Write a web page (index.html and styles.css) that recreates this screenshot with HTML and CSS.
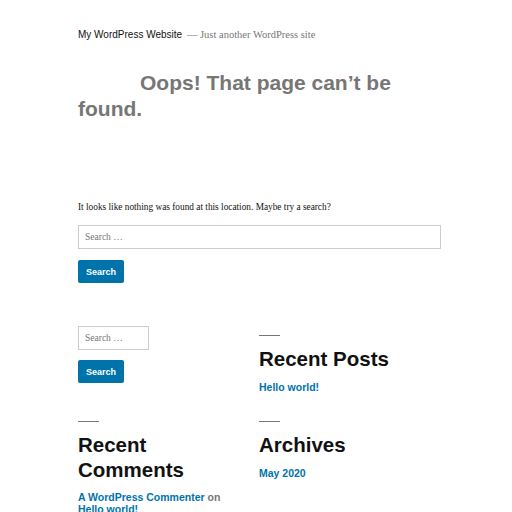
FILE: index.html
```html
<!DOCTYPE html>
<html>
<head>
<meta charset="utf-8">
<link rel="stylesheet" href="styles.css">
</head>
<body>
<div class="site">
  <header class="site-header">
    <span class="site-title">My WordPress Website</span>
    <span class="site-desc">— Just another WordPress site</span>
  </header>
  <main>
    <h1 class="page-title">Oops! That page can’t be found.</h1>
    <p class="intro">It looks like nothing was found at this location. Maybe try a search?</p>
    <form class="search-form">
      <input class="search-field" type="search" placeholder="Search …">
      <button class="search-submit" type="button">Search</button>
    </form>
  </main>
  <section class="widgets">
    <div class="widget">
      <form class="search-form small">
        <input class="search-field" type="search" placeholder="Search …">
        <button class="search-submit" type="button">Search</button>
      </form>
    </div>
    <div class="widget">
      <div class="rule"></div>
      <h2 class="widget-title">Recent Posts</h2>
      <a class="wlink" href="#">Hello world!</a>
    </div>
    <div class="widget">
      <div class="rule"></div>
      <h2 class="widget-title">Recent Comments</h2>
      <div class="comment"><a class="wlink" href="#">A WordPress Commenter</a> on <a class="wlink" href="#">Hello world!</a></div>
    </div>
    <div class="widget">
      <div class="rule"></div>
      <h2 class="widget-title">Archives</h2>
      <a class="wlink" href="#">May 2020</a>
    </div>
  </section>
</div>
</body>
</html>
```
FILE: styles.css
```css
html, body { margin: 0; padding: 0; background: #fff; }
body { font-family: "Liberation Sans", Arial, sans-serif; color: #111; }
.site { margin-left: 78px; width: 363px; }
.site-header { padding-top: 28px; height: 14px; font-size: 10px; line-height: 14px; }
.site-title { color: #111; }
.site-desc { font-family: "Liberation Serif", serif; font-size: 10.5px; color: #767676; margin-left: 2px; }
.page-title {
  margin: 28px 0 0; font-size: 21px; line-height: 26px; font-weight: bold;
  color: #767676; text-indent: 62px;
}
.intro { font-family: "Liberation Serif", serif; font-size: 9.3px; line-height: 14px; margin: 78px 0 0; color: #111; }
.search-form { margin-top: 11px; display: flex; flex-direction: column; align-items: flex-start; }
.search-field {
  box-sizing: border-box; width: 100%; height: 24px; border: 1px solid #ccc; border-radius: 0;
  padding: 0 6px; font-family: "Liberation Serif", serif; font-size: 9.5px; color: #767676; outline: none;
}
.search-field::placeholder { color: #767676; }
.search-submit {
  margin-top: 11px; height: 23px; width: 46px; border: 0; border-radius: 2px; background: #0073aa;
  color: #fff; font-family: "Liberation Sans", Arial, sans-serif; font-weight: bold; font-size: 9px; padding: 0;
}
.widgets { display: grid; grid-template-columns: 160px 182px; column-gap: 21px; margin-top: 43px; row-gap: 19px; }
.widget { display: flex; flex-direction: column; align-items: flex-start; min-width: 0; }
.search-form.small { margin-top: 0; }
.search-form.small .search-field { width: 71px; }
.search-form.small .search-submit { margin-top: 10px; }
.rule { width: 21px; height: 1px; background: #767676; margin-top: 9px; }
.widget-title { margin: 10px 0 0; font-size: 20.5px; line-height: 25px; font-weight: bold; color: #111; }
.wlink { color: #0073aa; font-weight: bold; font-size: 10.5px; line-height: 12px; text-decoration: none; margin-top: 10px; }
.comment { font-size: 10.5px; line-height: 12px; margin-top: 9px; color: #767676; font-weight: bold; }
.comment .wlink { margin: 0; }
```
